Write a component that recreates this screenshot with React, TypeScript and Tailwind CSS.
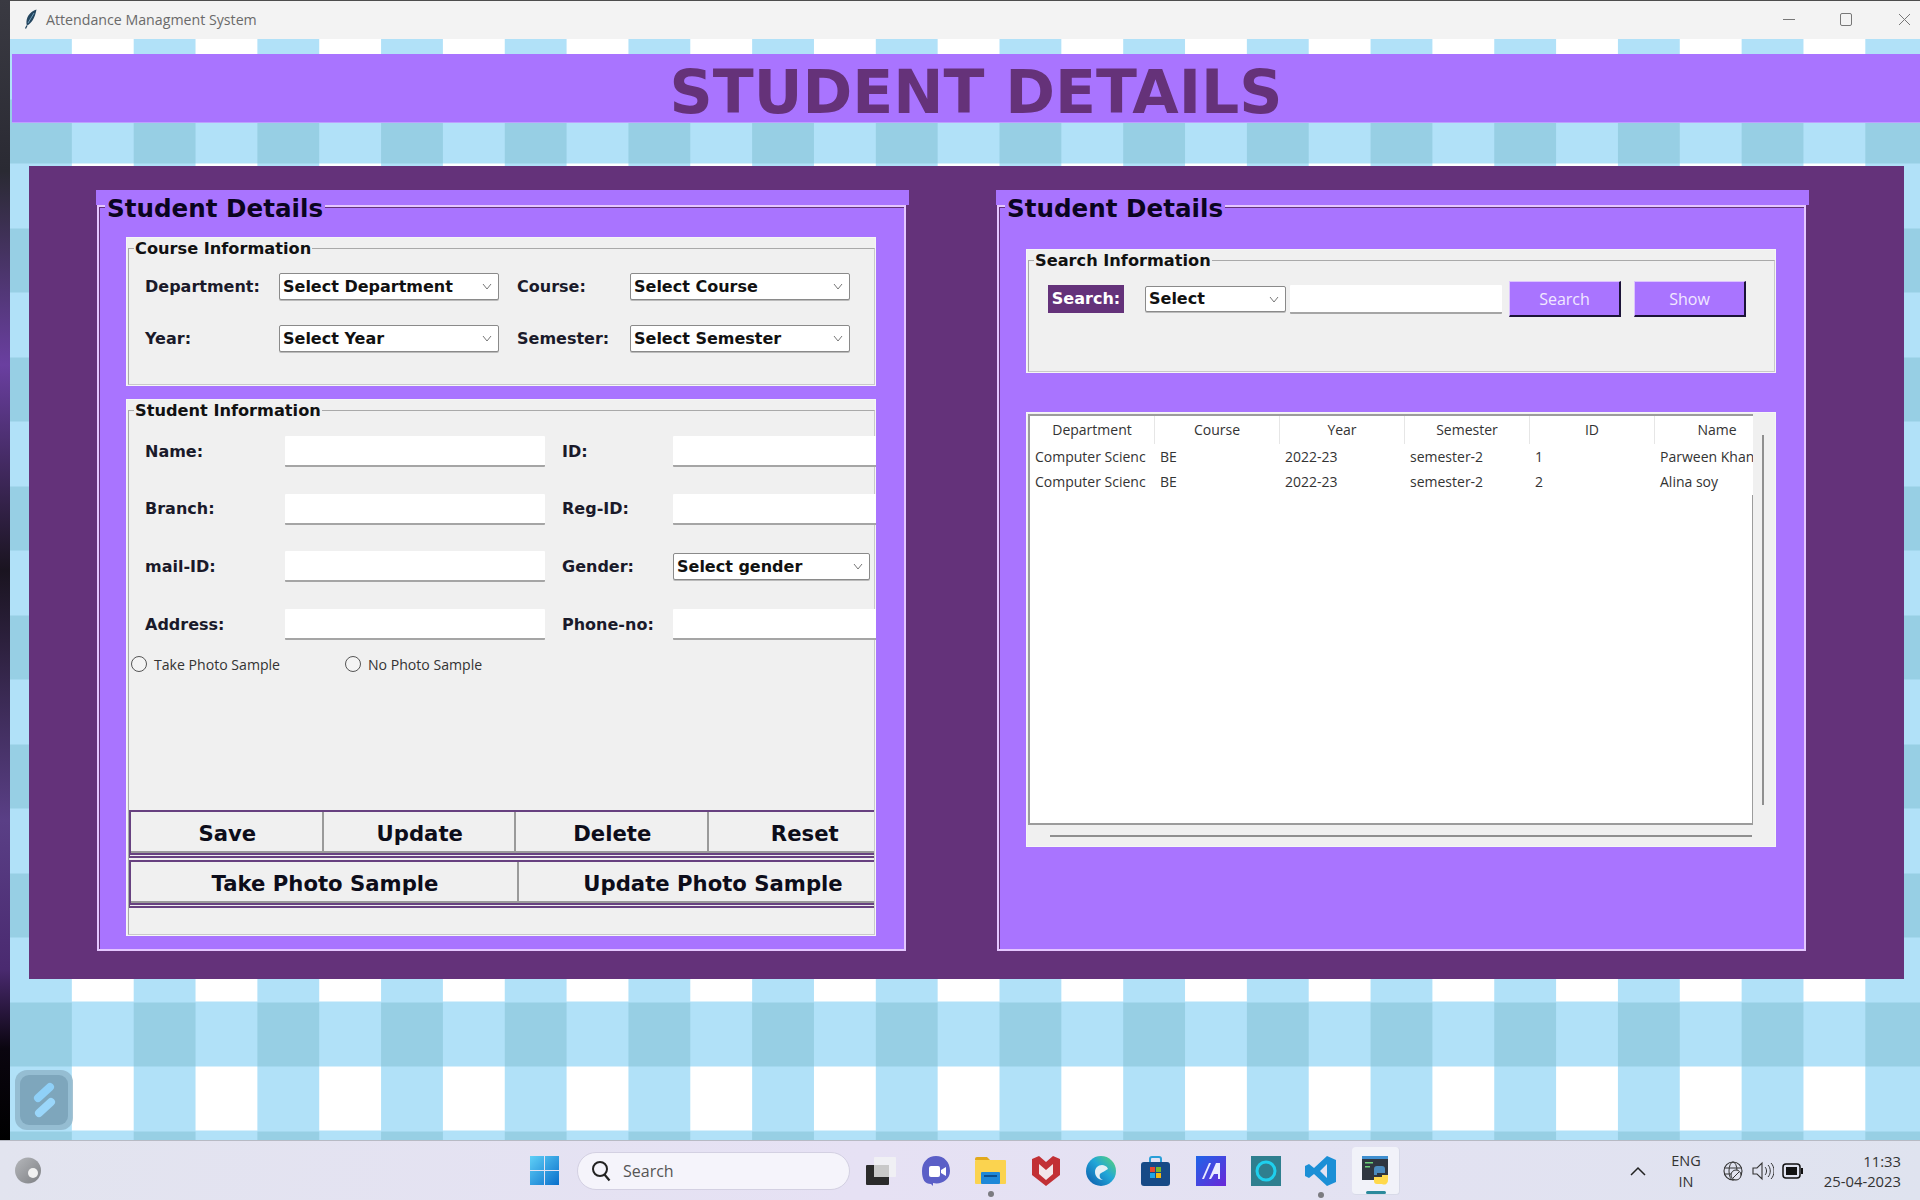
import React from "react";

const PURPLE = "bg-[#a974ff]";

function Chevron() {
  return (
    <svg width="10" height="7" viewBox="0 0 10 7" className="shrink-0">
      <path d="M1 1l4 5 4-5" fill="none" stroke="#777" strokeWidth="1" />
    </svg>
  );
}

function Combo({ text, className }: { text: string; className: string }) {
  return (
    <div className={`flex items-center justify-between bg-white border border-[#8a8a8a] rounded-[2px] pl-[3px] pr-[6px] font-['DejaVu_Sans',sans-serif] font-bold text-[16px] text-[#111] shadow-[0_1px_0_#bbb] ${className}`}>
      <span className="whitespace-nowrap">{text}</span>
      <Chevron />
    </div>
  );
}

function Label({ text, className = "" }: { text: string; className?: string }) {
  return (
    <div className={`flex items-center font-['DejaVu_Sans',sans-serif] font-bold text-[16px] text-[#1a1a2a] whitespace-nowrap ${className}`}>{text}</div>
  );
}

function Entry({ className }: { className: string }) {
  return <div className={`bg-white border-b-2 border-[#a5a5a5] rounded-[1px] ${className}`} />;
}

function GroupBox({ title, className, children }: { title: string; className: string; children: React.ReactNode }) {
  return (
    <div className={`relative overflow-hidden bg-[#f0f0f0] pt-[11px] pl-[2px] pr-[1px] pb-[1px] flex flex-col shadow-[inset_0_0_0_1px_#f6f6f6] ${className}`}>
      <div className="flex-1 border border-[#a9a9a9] border-b-[#c9c9c9] border-r-[#c9c9c9] min-h-0">{children}</div>
      <div className="absolute left-[8px] top-[1px] h-[22px] px-[1px] bg-[#f0f0f0] flex items-center font-['DejaVu_Sans',sans-serif] font-bold text-[16.2px] text-[#111] whitespace-nowrap">{title}</div>
    </div>
  );
}

function Frame({ children }: { children: React.ReactNode }) {
  return (
    <div className="relative w-[813px] h-[761px] flex flex-col">
      <div className={`h-[15px] w-[813px] ${PURPLE}`} />
      <div className={`w-[809px] ml-[1px] flex-1 ${PURPLE} border-2 border-[#e4c6ff] shadow-[inset_1px_1px_0_#64327a]`}>{children}</div>
      <div className={`absolute left-[9px] top-[3px] h-[32px] px-[2px] ${PURPLE} flex items-center font-['DejaVu_Sans',sans-serif] font-bold text-[24.6px] text-[#0b0420] whitespace-nowrap`}>Student Details</div>
    </div>
  );
}

function ActionRow({ items, width, className = "" }: { items: string[]; width: string; className?: string }) {
  return (
    <div className={`flex w-[800px] border-t-2 border-l-2 border-b-[5px] border-[#674180] [border-bottom-style:double] ${className}`}>
      {items.map((t) => (
        <div key={t} className={`${width} shrink-0 h-[41px] pt-[5px] pl-[2px] flex items-center justify-center bg-[#f0f0f0] border-r-2 border-b-2 border-[#9a9a9a] font-['DejaVu_Sans',sans-serif] font-bold text-[21.2px] text-[#0d0d1a]`}>{t}</div>
      ))}
    </div>
  );
}

function Radio({ text, className = "" }: { text: string; className?: string }) {
  return (
    <div className={`flex items-center ${className}`}>
      <div className="w-[16px] h-[16px] rounded-full border border-[#555] bg-[#f4f4f4] shrink-0" />
      <div className="ml-[7px] font-['Open_Sans',sans-serif] text-[14.1px] text-[#333] whitespace-nowrap">{text}</div>
    </div>
  );
}

const rows = [
  ["Computer Scienc", "BE", "2022-23", "semester-2", "1", "Parween Khan"],
  ["Computer Scienc", "BE", "2022-23", "semester-2", "2", "Alina soy"],
];
const heads = ["Department", "Course", "Year", "Semester", "ID", "Name"];

function Table() {
  return (
    <div className="w-[750px] h-[435px] bg-[#f0f0f0] border border-[#f6f6f6] pl-[1px] pt-[1px] grid grid-cols-[725px_1fr] grid-rows-[411px_1fr] font-['Open_Sans',sans-serif] text-[14px] text-[#333]">
      <div className="relative overflow-hidden bg-white border-t-2 border-l-2 border-b-2 border-[#9c9c9c]">
        <div className="flex h-[28px] w-[760px]">
          {heads.map((h) => (
            <div key={h} className="shrink-0 w-[125px] h-full pb-[2px] flex items-center justify-center border-r border-[#e6e6e6]">{h}</div>
          ))}
        </div>
        {rows.map((r) => (
          <div key={r[4]} className="flex h-[25px] w-[760px] items-center">
            {r.map((c, i) => (
              <div key={i} className="shrink-0 w-[125px] overflow-hidden whitespace-nowrap pl-[5px]">{c}</div>
            ))}
          </div>
        ))}
        <div className="absolute right-0 top-[79px] bottom-0 w-[1px] bg-[#9c9c9c]" />
      </div>
      <div className="flex justify-center pt-[21px] pb-[20px] pr-[3px]">
        <div className="w-[2px] h-full bg-[#8f8f8f]" />
      </div>
      <div className="pl-[22px] pt-[10px]">
        <div className="h-[2px] w-[702px] bg-[#8f8f8f]" />
      </div>
      <div />
    </div>
  );
}

function LeftPanel() {
  return (
    <div className="pl-[27px] pt-[30px]">
      <GroupBox title="Course Information" className="w-[750px] h-[149px]">
        <div className="pl-[16px] pt-[24px] grid grid-cols-[134px_220px_113px_219px] gap-x-0 gap-y-[25px] auto-rows-[27px] w-[700px]">
          <Label text="Department:" />
          <Combo text="Select Department" className="h-[27px]" />
          <Label text="Course:" className="pl-[18px] w-[131px]" />
          <Combo text="Select Course" className="h-[27px] ml-[18px] w-[220px]" />
          <Label text="Year:" />
          <Combo text="Select Year" className="h-[27px]" />
          <Label text="Semester:" className="pl-[18px] w-[131px]" />
          <Combo text="Select Semester" className="h-[27px] ml-[18px] w-[220px]" />
        </div>
      </GroupBox>
      <GroupBox title="Student Information" className="w-[750px] h-[537px] mt-[13px]">
        <div className="pl-[16px] pt-[25px] grid grid-cols-[140px_260px_17px_111px_220px] gap-y-[26.7px] auto-rows-[31px] w-[760px]">
          <Label text="Name:" /><Entry className="h-[31px]" /><div /><Label text="ID:" /><Entry className="h-[31px]" />
          <Label text="Branch:" /><Entry className="h-[31px]" /><div /><Label text="Reg-ID:" /><Entry className="h-[31px]" />
          <Label text="mail-ID:" /><Entry className="h-[31px]" /><div /><Label text="Gender:" /><Combo text="Select gender" className="h-[27px] w-[197px] self-center" />
          <Label text="Address:" /><Entry className="h-[31px]" /><div /><Label text="Phone-no:" /><Entry className="h-[31px]" />
        </div>
        <div className="flex pl-[2px] mt-[16px] h-[16px]">
          <Radio text="Take Photo Sample" className="w-[214px]" />
          <Radio text="No Photo Sample" />
        </div>
        <div className="mt-[138px] overflow-hidden">
          <ActionRow items={["Save", "Update", "Delete", "Reset"]} width="w-[192.5px]" />
          <ActionRow items={["Take Photo Sample", "Update Photo Sample"]} width="w-[388px]" className="mt-[2px]" />
        </div>
      </GroupBox>
    </div>
  );
}

function RightPanel() {
  return (
    <div className="pl-[27px] pt-[42px]">
      <GroupBox title="Search Information" className="w-[750px] h-[124px]">
        <div className="flex items-center pl-[19px] pt-[20px]">
          <div className="w-[76px] h-[28px] bg-[#64327a] flex items-center justify-center font-['DejaVu_Sans',sans-serif] font-bold text-[16px] text-white">Search:</div>
          <Combo text="Select" className="w-[141px] h-[26px] ml-[21px]" />
          <Entry className="w-[212px] h-[29px] ml-[4px]" />
          <div className={`w-[112px] h-[36px] ml-[7px] ${PURPLE} border-t border-l border-t-[#dcc4ff] border-l-[#dcc4ff] border-r-2 border-b-2 border-r-[#1c1438] border-b-[#1c1438] flex items-center justify-center font-['Open_Sans',sans-serif] text-[16px] text-[#f1e8ff]`}>Search</div>
          <div className={`w-[112px] h-[36px] ml-[13px] ${PURPLE} border-t border-l border-t-[#dcc4ff] border-l-[#dcc4ff] border-r-2 border-b-2 border-r-[#1c1438] border-b-[#1c1438] flex items-center justify-center font-['Open_Sans',sans-serif] text-[16px] text-[#f1e8ff]`}>Show</div>
        </div>
      </GroupBox>
      <div className="mt-[39px]"><Table /></div>
    </div>
  );
}

function TitleBar() {
  return (
    <div className="h-[38px] bg-[#f3f3f3] flex items-center shrink-0 pl-[14px]">
      <svg width="14" height="20" viewBox="0 0 14 20" className="mb-[2px]">
        <path d="M12.5 0.5C7 2 3 7 2.5 12c-.2 2 0 3.5.5 4.5C7 15 11 9 12.5 0.5z" fill="#24465f" />
        <path d="M3 16.5L1.5 19.5" stroke="#24465f" strokeWidth="1.2" />
        <path d="M10 4L4 14" stroke="#7fb2d0" strokeWidth="0.8" />
      </svg>
      <div className="ml-[8px] mb-[1px] font-['Open_Sans',sans-serif] text-[14.2px] text-[#6a6a6a] whitespace-nowrap">Attendance Managment System</div>
      <div className="ml-auto mb-[2px] flex items-center pr-[9px] text-[#777]">
        <div className="w-[12px] h-[1px] bg-[#777]" />
        <div className="w-[12px] h-[13px] ml-[45px] border border-[#777] rounded-[2px]" />
        <svg width="13" height="13" viewBox="0 0 13 13" className="ml-[46px]"><path d="M1 1l11 11M12 1L1 12" stroke="#777" strokeWidth="1" /></svg>
      </div>
    </div>
  );
}

function Taskbar() {
  return (
    <div className="relative h-[60px] shrink-0 border-t border-[#b7bac4] bg-[linear-gradient(100deg,#e2e4ef_0%,#e6e1f4_45%,#dfe3ef_100%)] flex items-center font-['Open_Sans',sans-serif]">
      <svg width="28" height="27" viewBox="0 0 28 27" className="ml-[14px] shrink-0">
        <defs><linearGradient id="wg" x1="0" y1="0" x2="1" y2="1"><stop offset="0" stopColor="#b5b7bb" /><stop offset="1" stopColor="#7e8084" /></linearGradient></defs>
        <circle cx="14" cy="13.5" r="13" fill="url(#wg)" />
        <circle cx="19" cy="16" r="5" fill="#f1f1f1" />
      </svg>
      <svg width="29" height="29" viewBox="0 0 29 29" className="ml-[488px] shrink-0">
        <defs><linearGradient id="win" x1="0" y1="0" x2="1" y2="1"><stop offset="0" stopColor="#5fd0f7" /><stop offset="1" stopColor="#0a6fcb" /></linearGradient></defs>
        <path d="M0 0h14v14H0zM15 0h14v14H15zM0 15h14v14H0zM15 15h14v14H15z" fill="url(#win)" />
      </svg>
      <div className="ml-[18px] w-[273px] h-[38px] rounded-full bg-[#f5f4fb] border border-[#d3d0e2] flex items-center pl-[13px] shrink-0">
        <svg width="20" height="22" viewBox="0 0 20 22"><circle cx="9" cy="9" r="7" fill="none" stroke="#222" strokeWidth="2" /><path d="M13.5 14.5l5 6" stroke="#222" strokeWidth="2.2" /></svg>
        <div className="ml-[12px] text-[16px] text-[#555]">Search</div>
      </div>
      <svg width="30" height="28" viewBox="0 0 30 28" className="ml-[16px] shrink-0">
        <rect x="0" y="8" width="23" height="20" rx="1" fill="#2b2b2b" />
        <rect x="8" y="0" width="22" height="20" rx="1" fill="#f0f0f4" />
        <rect x="8" y="8" width="15" height="12" fill="#c9c9c9" />
      </svg>
      <svg width="30" height="30" viewBox="0 0 30 30" className="ml-[25px] shrink-0">
        <path d="M15 0C7 0 1 6 1 15s3 13 9 13l2 2v-3c8 2 17-3 17-12S23 0 15 0z" fill="#5b5fc7" />
        <rect x="8" y="10" width="11" height="11" rx="2" fill="#fff" />
        <path d="M20 14l5-3v9l-5-3z" fill="#fff" />
      </svg>
      <div className="relative ml-[24px] shrink-0 w-[31px] h-[27px]">
        <svg width="31" height="27" viewBox="0 0 31 27">
          <path d="M0 2a2 2 0 012-2h10l3 3H0z" fill="#e2a91c" />
          <rect x="0" y="3" width="31" height="24" rx="1" fill="#fbd34f" />
          <rect x="6" y="15" width="19" height="12" rx="1" fill="#1e88d8" />
          <rect x="9" y="18" width="13" height="2" fill="#0b4f8f" />
        </svg>
        <div className="absolute left-[13px] top-[34px] w-[6px] h-[6px] rounded-full bg-[#7b7b80]" />
      </div>
      <svg width="28" height="30" viewBox="0 0 28 30" className="ml-[26px] shrink-0">
        <path d="M0 3l7-3 7 6 7-6 7 3v16L14 30 0 19z" fill="#c23035" />
        <path d="M7 8v10l7 6 7-6V8l-7 6z" fill="#f2e6ea" />
      </svg>
      <svg width="30" height="30" viewBox="0 0 30 30" className="ml-[26px] shrink-0">
        <defs><linearGradient id="edge" x1="1" y1="0" x2="0" y2="1"><stop offset="0" stopColor="#5fd66e" /><stop offset="0.45" stopColor="#21a7d8" /><stop offset="1" stopColor="#0b55a8" /></linearGradient></defs>
        <circle cx="15" cy="15" r="15" fill="url(#edge)" />
        <path d="M22 13c-1-3-4-4-6-4-4 0-7 3-7 7s3 8 8 8c-3-1-4-4-3-6 1-1 3-2 8-5z" fill="#e4eff5" />
      </svg>
      <svg width="29" height="30" viewBox="0 0 29 30" className="ml-[25px] shrink-0">
        <path d="M9 7V3a2 2 0 012-2h7a2 2 0 012 2v4" fill="none" stroke="#2a9fd8" strokeWidth="2" />
        <rect x="0" y="6" width="29" height="24" rx="3" fill="#174a86" />
        <rect x="9" y="11" width="5" height="5" fill="#e8492f" /><rect x="15" y="11" width="5" height="5" fill="#7ab92a" />
        <rect x="9" y="17" width="5" height="5" fill="#1fa5e6" /><rect x="15" y="17" width="5" height="5" fill="#f6b912" />
      </svg>
      <svg width="30" height="30" viewBox="0 0 30 30" className="ml-[26px] shrink-0">
        <defs><linearGradient id="ma" x1="0" y1="0" x2="1" y2="1"><stop offset="0" stopColor="#1e64e8" /><stop offset="1" stopColor="#6b28d8" /></linearGradient></defs>
        <rect width="30" height="30" fill="url(#ma)" />
        <path d="M6 23L13 7h2L8 23zM13 23L20 7h4v16h-2v-5h-4l-3 5z" fill="#e9ecff" />
      </svg>
      <svg width="30" height="30" viewBox="0 0 30 30" className="ml-[25px] shrink-0">
        <rect width="30" height="30" fill="#2f7f8f" />
        <circle cx="15" cy="15" r="9" fill="none" stroke="#1fd0ee" strokeWidth="3" />
      </svg>
      <div className="relative ml-[24px] shrink-0 w-[31px] h-[30px]">
        <svg width="31" height="30" viewBox="0 0 31 30">
          <path d="M22 0l9 4v22l-9 4L9 18l-5 4-4-2V10l4-2 5 4zM22 8l-7 7 7 7z" fill="#1b8fd6" />
        </svg>
        <div className="absolute left-[13px] top-[36px] w-[6px] h-[6px] rounded-full bg-[#7b7b80]" />
      </div>
      <div className="relative ml-[16px] w-[48px] h-[48px] rounded-[4px] bg-[#f1f2f9] border-r border-b border-[#d8dae8] flex justify-center pt-[9px] shrink-0">
        <svg width="28" height="30" viewBox="0 0 28 30">
          <rect x="0" y="0" width="26" height="24" fill="#2f3640" />
          <rect x="0" y="0" width="26" height="3" fill="#3f8fd0" />
          <rect x="3" y="6" width="8" height="1.5" fill="#6fd07a" /><rect x="3" y="10" width="5" height="1.5" fill="#6fd07a" />
          <path d="M14 10h6a3 3 0 013 3v4h-8v2h-3v-6a3 3 0 013-3z" fill="#4b8bbe" />
          <path d="M20 28h-5a3 3 0 01-3-3v-4h8v-2h6v5a4 4 0 01-6 4z" fill="#ffd94c" />
        </svg>
        <div className="absolute left-[14px] top-[44px] w-[20px] h-[3px] rounded-full bg-[#2b8a9c]" />
      </div>
      <svg width="16" height="10" viewBox="0 0 16 10" className="ml-[230px] shrink-0"><path d="M1 9l7-7 7 7" fill="none" stroke="#222" strokeWidth="1.5" /></svg>
      <div className="ml-[20px] w-[40px] flex flex-col items-center text-[14.5px] leading-[21px] text-[#333] shrink-0"><span>ENG</span><span>IN</span></div>
      <svg width="20" height="22" viewBox="0 0 20 22" className="ml-[17px] shrink-0">
        <circle cx="10" cy="11" r="9" fill="none" stroke="#333" strokeWidth="1.1" /><ellipse cx="10" cy="11" rx="4" ry="9" fill="none" stroke="#333" strokeWidth="1" /><path d="M1 8h18M1 14h18" stroke="#333" strokeWidth="1" />
        <circle cx="13" cy="15" r="5" fill="#e3e4ef" stroke="#333" /><path d="M10 18l6-6" stroke="#333" />
      </svg>
      <svg width="22" height="20" viewBox="0 0 22 20" className="ml-[9px] shrink-0">
        <path d="M1 7h4l5-5v16l-5-5H1z" fill="none" stroke="#333" strokeWidth="1.1" /><path d="M13 6c2 2 2 6 0 8M16 4c3 3 3 9 0 12M19 2c4 4 4 12 0 16" fill="none" stroke="#333" strokeWidth="1" />
      </svg>
      <svg width="22" height="16" viewBox="0 0 22 16" className="ml-[8px] shrink-0">
        <rect x="1" y="1" width="17" height="14" rx="3" fill="none" stroke="#111" strokeWidth="1.5" /><rect x="4" y="4" width="11" height="8" fill="#111" /><rect x="19" y="5" width="2" height="6" fill="#111" />
      </svg>
      <div className="ml-auto pr-[19px] flex flex-col items-end text-[14.8px] leading-[20px] text-[#333] shrink-0"><span>11:33</span><span>25-04-2023</span></div>
    </div>
  );
}

export default function App() {
  return (
    <div className="relative w-[1920px] h-[1200px] overflow-hidden flex flex-col bg-black">
      <div className="flex flex-1 min-h-0">
        <div className="w-[10px] bg-[linear-gradient(180deg,#3a3a42_0%,#2a2a33_15%,#6a3fa0_32%,#1a1420_50%,#5a3f86_72%,#4a2a70_85%,#0a050f_92%,#000_100%)]" />
        <div className="w-[1910px] flex flex-col border-t border-[#4d4d4d]">
          <TitleBar />
          <div className="flex-1 pt-[15px] bg-[conic-gradient(#fff_25%,#b1e1f8_0_50%,#97cfe4_0_75%,#b1e1f8_0)] bg-[size:123.7px_129px] bg-[position:0_-4.5px]">
            <div className={`ml-[2px] h-[69px] ${PURPLE} flex items-center justify-center pl-[20px] pt-[8px] border-b border-[#bda0ff]`}>
              <div className="font-['DejaVu_Sans',sans-serif] font-bold text-[60px] leading-none text-[#653279] whitespace-nowrap">STUDENT DETAILS</div>
            </div>
            <div className="ml-[19px] mt-[43px] w-[1875px] h-[813px] bg-[#64327a] flex pl-[67px] pt-[24px] gap-[87px]">
              <Frame><LeftPanel /></Frame>
              <Frame><RightPanel /></Frame>
            </div>
          </div>
        </div>
      </div>
      <Taskbar />
      <div className="absolute left-[15px] top-[1070px] w-[58px] h-[60px] rounded-[12px] bg-[#8fb4c8]/80 p-[5px]">
        <div className="w-full h-full rounded-[9px] bg-[#7ea6bc] flex items-center justify-center">
          <svg width="32" height="36" viewBox="0 0 32 36">
            <path d="M22 5L10 16" stroke="#8fd0f8" strokeWidth="8" strokeLinecap="round" />
            <path d="M23 20L11 31" stroke="#9ad6fa" strokeWidth="8" strokeLinecap="round" />
          </svg>
        </div>
      </div>
    </div>
  );
}
